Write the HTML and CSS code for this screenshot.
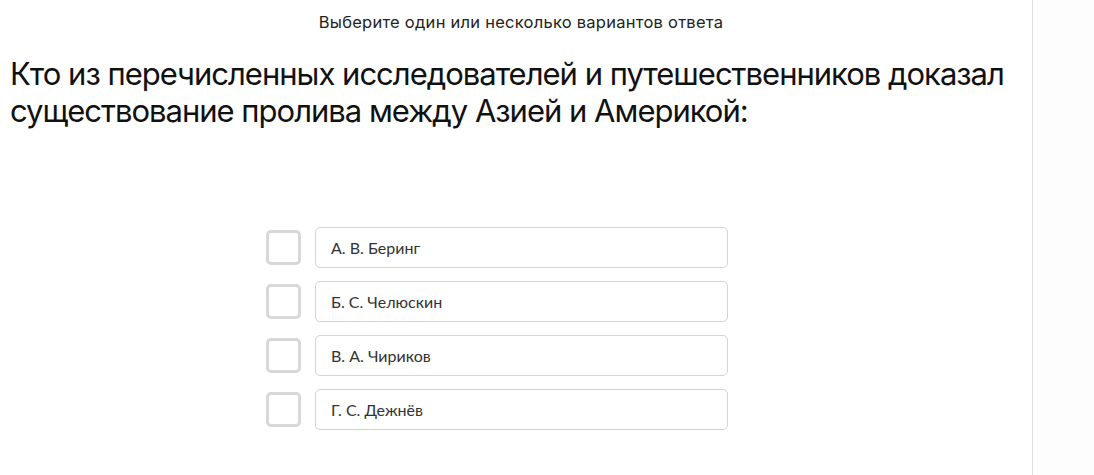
FILE: index.html
```html
<!DOCTYPE html>
<html lang="ru">

<head>
  <meta charset="UTF-8" />
  <meta name="viewport" content="width=device-width, initial-scale=1.0" />
  <title>Вопрос</title>
  <link rel="stylesheet" href="styles.css">
</head>

<body>
  <div class="layout">
    <main class="question">
      <p class="hint">Выберите один или несколько вариантов ответа</p>
      <h1 class="question-text">Кто из перечисленных исследователей и путешественников доказал существование пролива между Азией и Америкой:</h1>

      <ul class="answers">
        <li class="answer">
          <span class="checkbox"></span>
          <span class="answer-text">А. В. Беринг</span>
        </li>
        <li class="answer">
          <span class="checkbox"></span>
          <span class="answer-text">Б. С. Челюскин</span>
        </li>
        <li class="answer">
          <span class="checkbox"></span>
          <span class="answer-text">В. А. Чириков</span>
        </li>
        <li class="answer">
          <span class="checkbox"></span>
          <span class="answer-text">Г. С. Дежнёв</span>
        </li>
      </ul>
    </main>
    <aside class="sidebar"></aside>
  </div>
</body>

</html>
```

FILE: styles.css
```css
body {
  margin: 0;
  background: #fff;
  color: #1a1a1a;
  font-family: Inter, "Noto Sans", sans-serif;
}

.layout {
  display: flex;
  height: 475px;
}

.question {
  width: 1032px;
  border-right: 1px solid #dedede;
}

.sidebar {
  flex: 1;
  background: #fdfdfd;
}

.hint {
  margin: 12px 0 0;
  padding-left: 10px;
  text-align: center;
  font-size: 16.5px;
  line-height: 20px;
  letter-spacing: 0.25px;
  color: #222;
}

.question-text {
  margin: 23px 0 0 10px;
  font-size: 31px;
  font-weight: 400;
  line-height: 37px;
  letter-spacing: -1px;
  color: #111;
}

.answers {
  list-style: none;
  margin: 98px 0 0 266px;
  padding: 0;
  width: 462px;
  display: flex;
  flex-direction: column;
  gap: 13px;
}

.answer {
  display: flex;
  align-items: center;
  gap: 14px;
}

.checkbox {
  width: 29px;
  height: 29px;
  border: 3px solid #d8d8d8;
  border-radius: 5px;
  flex-shrink: 0;
}

.answer-text {
  flex: 1;
  height: 39px;
  display: flex;
  align-items: center;
  padding: 0 15px;
  border: 1px solid #d4d4d4;
  border-radius: 5px;
  font-family: Lato, "Open Sans", sans-serif;
  font-size: 16px;
  color: #333;
}
```
